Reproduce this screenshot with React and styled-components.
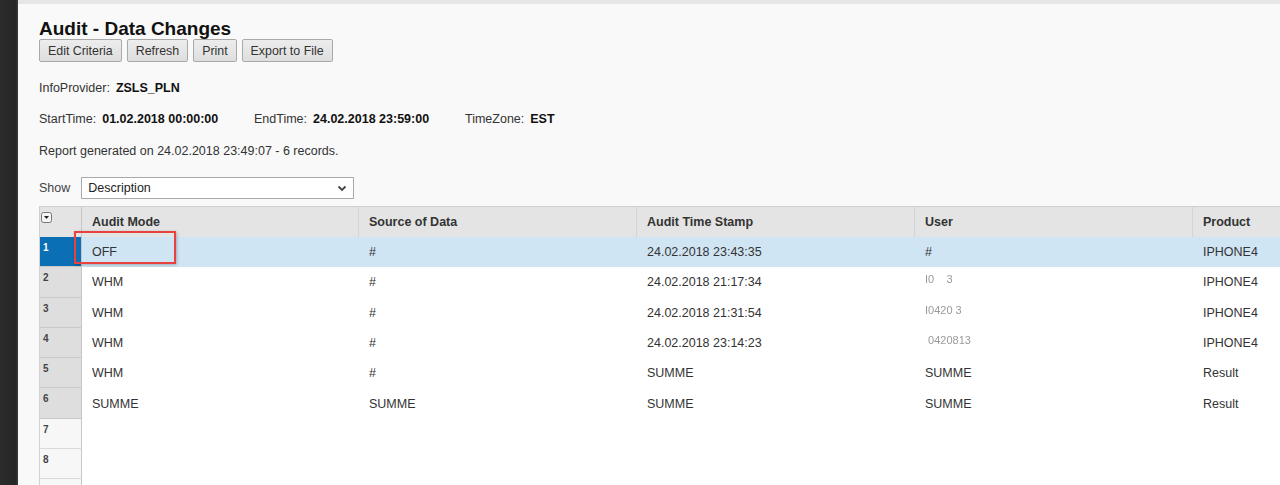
import React from "react";
import styled, { createGlobalStyle } from "styled-components";

const columns = ["Audit Mode", "Source of Data", "Audit Time Stamp", "User", "Product"];

const rows = [
  { mode: "OFF", source: "#", stamp: "24.02.2018 23:43:35", user: "#", product: "IPHONE4", selected: true },
  { mode: "WHM", source: "#", stamp: "24.02.2018 21:17:34", user: "I0    3", hidden: true, product: "IPHONE4" },
  { mode: "WHM", source: "#", stamp: "24.02.2018 21:31:54", user: "I0420 3", hidden: true, product: "IPHONE4" },
  { mode: "WHM", source: "#", stamp: "24.02.2018 23:14:23", user: " 0420813", hidden: true, product: "IPHONE4" },
  { mode: "WHM", source: "#", stamp: "SUMME", user: "SUMME", product: "Result" },
  { mode: "SUMME", source: "SUMME", stamp: "SUMME", user: "SUMME", product: "Result" },
];

const GlobalStyle = createGlobalStyle`
  html, body {
    margin: 0;
    height: 485px;
    overflow: hidden;
    background: #f9f9f9;
  }
  body {
    font-family: "Liberation Sans", Arial, sans-serif;
    color: #333;
  }
`;

const Frame = styled.div`
  display: flex;
  height: 485px;
`;

const SideBar = styled.div`
  width: 18px;
  flex: none;
  background: linear-gradient(to right, #2c2c2c, #262626 85%, #3a3a3a);
`;

const Main = styled.main`
  flex: 1;
  min-width: 0;
  overflow: hidden;
  border-top: 4px solid #e6e6e6;
  padding: 14px 0 0 21px;
  background: #f9f9f9;
`;

const Title = styled.h1`
  margin: 0;
  font-size: 19px;
  line-height: 21px;
  font-weight: bold;
  color: #111;
`;

const Toolbar = styled.div`
  display: flex;
  gap: 5px;
`;

const Button = styled.button`
  height: 23px;
  padding: 0 8px;
  font-family: inherit;
  font-size: 12.4px;
  color: #333;
  background: linear-gradient(#ededed, #dedede);
  border: 1px solid #a9a9a9;
  border-radius: 2px;
`;

const InfoLine = styled.div`
  display: flex;
  margin-top: ${(p) => p.$top}px;
  font-size: 12.5px;
  line-height: 16px;
  color: #333;
`;

const Field = styled.span`
  display: inline-flex;
  gap: 6px;
  width: ${(p) => (p.$width ? `${p.$width}px` : "auto")};
`;

const Value = styled.b`
  color: #111;
`;

const ShowRow = styled.div`
  display: flex;
  align-items: center;
  gap: 11px;
  margin-top: 18px;
  font-size: 12.5px;
  color: #444;
`;

const Select = styled.div`
  width: 273px;
  height: 22px;
  display: flex;
  align-items: center;
  justify-content: space-between;
  padding: 0 6px;
  background: #fff;
  border: 1px solid #a9a9a9;
  box-sizing: border-box;
  color: #222;
  font-size: 12.5px;
`;

const Grid = styled.div`
  margin-top: 7px;
  display: grid;
  grid-template-columns: 43px 277px repeat(4, 278px);
  width: max-content;
  position: relative;
`;

const Corner = styled.div`
  height: 31px;
  box-sizing: border-box;
  background: #e4e4e4;
  border-top: 1px solid #cfcfcf;
  border-left: 1px solid #cfcfcf;
  border-right: 1px solid #c6c6c6;
  padding: 2px 0 0 1px;
`;

const HeadCell = styled.div`
  height: 31px;
  box-sizing: border-box;
  display: flex;
  align-items: center;
  padding-left: 10px;
  background: #e4e4e4;
  border-top: 1px solid #cfcfcf;
  border-right: 1px solid #d4d4d4;
  font-size: 12.5px;
  font-weight: bold;
  color: #333;
`;

const RowNum = styled.div`
  height: 30.3px;
  box-sizing: border-box;
  padding: 5px 0 0 3px;
  font-size: 10px;
  font-weight: bold;
  border-left: 1px solid #d2d2d2;
  border-right: 1px solid #c6c6c6;
  border-bottom: 1px solid ${(p) => (p.$filled ? "#c9c9c9" : "#dadada")};
  color: ${(p) => (p.$selected ? "#fff" : "#444")};
  background: ${(p) => (p.$selected ? "#0b6fb6" : p.$filled ? "#dedede" : "#f7f7f7")};
`;

const Cell = styled.div`
  height: 30.3px;
  display: flex;
  align-items: center;
  padding-left: 10px;
  font-size: 12.5px;
  color: #333;
  background: ${(p) => (p.$selected ? "#d0e5f4" : "#fff")};
  white-space: pre;
`;

const Blurred = styled.span`
  color: #9a9a9a;
  filter: blur(0.5px);
  font-size: 11px;
  position: relative;
  top: -3px;
`;

const Highlight = styled.div`
  position: absolute;
  left: 35px;
  top: 25px;
  width: 102px;
  height: 33px;
  box-sizing: border-box;
  border: 2.5px solid #e8413e;
  box-shadow: 1px 1px 3px rgba(0, 0, 0, 0.25);
  pointer-events: none;
`;

const MenuIcon = () => (
  <svg width="11" height="11" viewBox="0 0 11 11">
    <rect x="0.5" y="0.5" width="10" height="10" rx="2" fill="#f4f4f4" stroke="#777" />
    <path d="M3 4 L8 4 L5.5 7 Z" fill="#222" />
  </svg>
);

const Chevron = () => (
  <svg width="10" height="7" viewBox="0 0 10 7">
    <path d="M1.5 1.5 L5 5 L8.5 1.5" fill="none" stroke="#444" strokeWidth="1.8" />
  </svg>
);

const keys = ["mode", "source", "stamp", "user", "product"];

export default function App() {
  // the last, partly visible row shows no number
  const blank = ["7", "8", ""];
  return (
    <>
      <GlobalStyle />
      <Frame>
        <SideBar />
        <Main>
          <Title>Audit - Data Changes</Title>
          <Toolbar>
            <Button>Edit Criteria</Button>
            <Button>Refresh</Button>
            <Button>Print</Button>
            <Button>Export to File</Button>
          </Toolbar>

          <InfoLine $top={18}>
            <Field>
              InfoProvider: <Value>ZSLS_PLN</Value>
            </Field>
          </InfoLine>
          <InfoLine $top={15}>
            <Field $width={215}>
              StartTime: <Value>01.02.2018 00:00:00</Value>
            </Field>
            <Field $width={211}>
              EndTime: <Value>24.02.2018 23:59:00</Value>
            </Field>
            <Field>
              TimeZone: <Value>EST</Value>
            </Field>
          </InfoLine>
          <InfoLine $top={16}>Report generated on 24.02.2018 23:49:07 - 6 records.</InfoLine>

          <ShowRow>
            Show
            <Select>
              Description
              <Chevron />
            </Select>
          </ShowRow>

          <Grid>
            <Corner>
              <MenuIcon />
            </Corner>
            {columns.map((c) => (
              <HeadCell key={c}>{c}</HeadCell>
            ))}
            {rows.map((r, i) => (
              <React.Fragment key={i}>
                <RowNum $filled $selected={r.selected}>
                  {i + 1}
                </RowNum>
                {keys.map((k) => (
                  <Cell key={k} $selected={r.selected}>
                    {k === "user" && r.hidden ? <Blurred>{r[k]}</Blurred> : r[k]}
                  </Cell>
                ))}
              </React.Fragment>
            ))}
            {blank.map((n, i) => (
              <React.Fragment key={i}>
                <RowNum>{n}</RowNum>
                {keys.map((k) => (
                  <Cell key={k} />
                ))}
              </React.Fragment>
            ))}
            <Highlight />
          </Grid>
        </Main>
      </Frame>
    </>
  );
}
